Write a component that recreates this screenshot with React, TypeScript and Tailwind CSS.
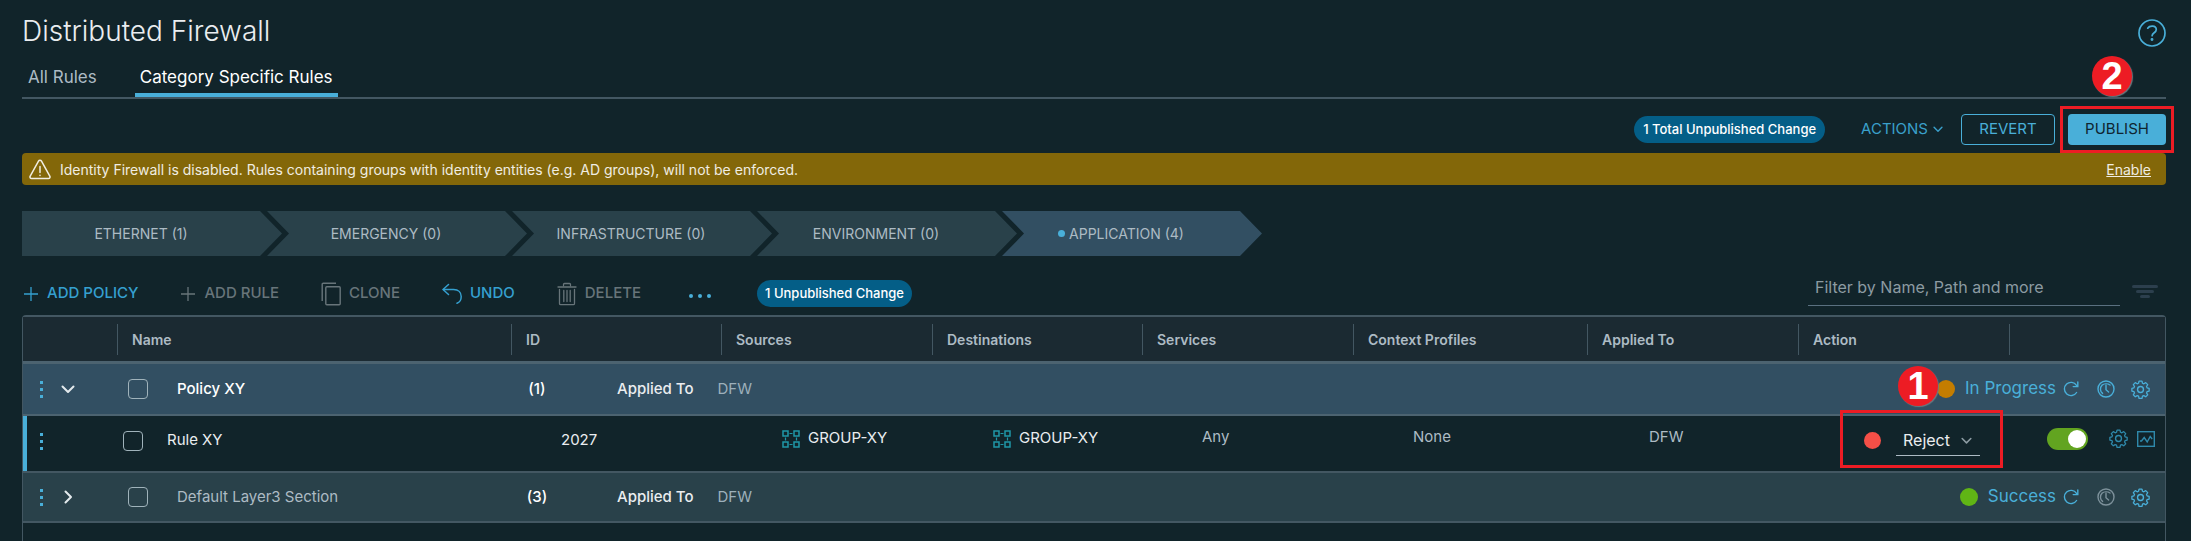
import React from "react";

type P = { className?: string };

const Chevron = ({ className = "", dir = "down" }: P & { dir?: "down" | "right" }) => (
  <svg viewBox="0 0 14 14" className={className} fill="none" stroke="currentColor" strokeWidth="2" strokeLinecap="round" strokeLinejoin="round">
    {dir === "down" ? <path d="M1.5 4.5 7 10l5.5-5.5" /> : <path d="M4.5 1.5 10 7l-5.5 5.5" />}
  </svg>
);

const Plus = () => (
  <svg viewBox="0 0 16 16" className="size-4" stroke="currentColor" strokeWidth="1.3"><path d="M8 1v14M1 8h14" /></svg>
);

const Clone = () => (
  <svg viewBox="0 0 20 24" className="h-6 w-5" fill="none" stroke="currentColor" strokeWidth="1.4">
    <path d="M1.2 19V2.200a1 1 0 0 1 1-1H15" />
    <rect x="4.800" y="4.800" width="14.400" height="18" rx="1" />
  </svg>
);

const Undo = () => (
  <svg viewBox="0 0 20 22" className="h-[22px] w-5" fill="none" stroke="currentColor" strokeWidth="1.5" strokeLinecap="round" strokeLinejoin="round">
    <path d="M6.500 1.500 1 6.500l5.500 5" /><path d="M1.500 6.500h10c5 0 7.700 3.200 7.700 7 0 3-1.500 5.800-4.200 6.700" />
  </svg>
);

const Trash = () => (
  <svg viewBox="0 0 20 24" className="h-6 w-5" fill="none" stroke="currentColor" strokeWidth="1.300" strokeLinecap="round">
    <path d="M1 5h18M6.500 3.500V2.500a1 1 0 0 1 1-1h5a1 1 0 0 1 1 1v1M2.500 7.500v14a1.200 1.200 0 0 0 1.200 1.200h12.600a1.200 1.200 0 0 0 1.200-1.200v-14M6.800 8.500v11M10 8.500v11M13.200 8.500v11" />
  </svg>
);

const Gear = () => (
  <svg viewBox="0 0 36 36" className="size-[19px]" fill="none" stroke="currentColor" strokeWidth="2.600" strokeLinejoin="round">
    <path d="M15 2.500h6l1 4.400 2.700 1.100 3.900-2.400 4 4-2.400 3.900 1.100 2.700 4.200 1v5.600l-4.200 1-1.100 2.700 2.400 3.900-4 4-3.900-2.400-2.700 1.100-1 4.400h-6l-1-4.400-2.700-1.100-3.900 2.400-4-4 2.400-3.900-1.100-2.700-4.200-1v-5.600l4.200-1 1.100-2.700-2.400-3.900 4-4 3.900 2.400 2.700-1.100z" transform="translate(1.200 -.3) scale(.935)" />
    <circle cx="18" cy="18" r="5.600" />
  </svg>
);

const History = () => (
  <svg viewBox="0 0 18 18" className="size-[18px]" fill="none" stroke="currentColor" strokeWidth="1.400" strokeLinecap="round">
    <circle cx="9" cy="9" r="8" /><path d="M5 5.200A5.500 5.500 0 0 0 5.600 13.400M5 5.200C7 3.600 10.500 3.300 13 5M9 5.200v4.600l2.600 2.200" />
  </svg>
);

const Refresh = () => (
  <svg viewBox="0 0 16 16" className="size-4" fill="none" stroke="currentColor" strokeWidth="1.400" strokeLinecap="round">
    <path d="M13.600 11.500A6.600 6.600 0 1 1 13.500 4.300M14.800 1v4.600h-4.600" />
  </svg>
);

const Chart = () => (
  <svg viewBox="0 0 18 16" className="h-4 w-[18px]" fill="none" stroke="currentColor" strokeWidth="1.400">
    <rect x=".7" y=".7" width="16.600" height="14.600" /><path d="M3 10h1.500l2.700-3.500 3 4.500 3-5.500 2 2.500" />
  </svg>
);

const Group = () => (
  <svg viewBox="0 0 18 18" className="size-[18px]" fill="none" stroke="#1f97a8" strokeWidth="1.500">
    <path d="M1 1h5v5H1zM12 1h5v5h-5zM1 12h5v5H1zM12 12h5v5h-5z" />
    <path strokeWidth="1.200" d="M7.500 3.500h3M7.500 14.500h3M3.500 7.500v3M14.500 7.500v3" />
  </svg>
);

const Dots = () => (
  <button aria-label="Row menu" className="flex w-3 flex-col items-center gap-[4px] text-[#49afd9]">
    <i className="size-[3px] bg-current" /><i className="size-[3px] bg-current" /><i className="size-[3px] bg-current" />
  </button>
);

const Check = ({ label }: { label: string }) => (
  <input type="checkbox" aria-label={label} className="size-5 shrink-0 appearance-none rounded border border-[#a0b3bb]" />
);

const Badge = ({ n, className = "" }: P & { n: string }) => (
  <span className={"absolute flex size-10 items-center justify-center rounded-full bg-[#ed1c24] font-['Liberation_Sans',sans-serif] text-[38px] leading-none font-bold text-white shadow-[1px_1px_1px_#6d7a80] " + className}>{n}</span>
);

const steps = ["ETHERNET (1)", "EMERGENCY (0)", "INFRASTRUCTURE (0)", "ENVIRONMENT (0)", "APPLICATION (4)"];
const heads = ["Name", "ID", "Sources", "Destinations", "Services", "Context Profiles", "Applied To", "Action", ""];

const Tool = ({ label, icon, on }: { label: string; icon: React.ReactNode; on?: boolean }) => (
  <button className={"flex items-center gap-2 text-[15px] font-medium " + (on ? "text-[#35a0d0]" : "text-[#68757a]")}>{icon}{label}</button>
);

const PolicyRow = ({ open, name, count, status }: { open?: boolean; name: string; count: string; status: string }) => {
  const bg = open ? "bg-[#324f62] border-b-2 border-[#4c6370]" : "bg-[#29414a] border-b-2 border-[#435762]";
  return (
    <tr>
      <td className={bg}>
        <div className="flex items-center gap-[14px] pl-3">
          <Dots />
          <button aria-label="Toggle policy" className="text-[#e3eaed]"><Chevron className="size-[14px]" dir={open ? "down" : "right"} /></button>
        </div>
      </td>
      <td className={bg}>
        <div className={"flex items-center gap-[29px] pl-[11px] " + (open ? "font-medium text-white" : "text-[#adbbc4]")}>
          <Check label={name} />{name}
        </div>
      </td>
      <td colSpan={8} className={bg}>
        <div className={"flex items-center pr-[15px] " + (open ? "h-[50px]" : "h-[48px]")}>
          <span className="w-[52px] text-center font-medium text-white">{count}</span>
          <span className="ml-[54px] font-medium text-[#eaedf0]">Applied To</span>
          <span className="ml-6 text-[#9db0bb]">DFW</span>
          <div className="ml-auto flex items-center text-[#49afd9]">
            <i className={"mr-[10px] size-[18px] rounded-full " + (open ? "bg-[#c47d00]" : "bg-[#60b515]")} />
            <a href="#status" className="text-[17px]">{status}</a>
            <button aria-label="Refresh" className="ml-[7px]"><Refresh /></button>
            <button aria-label="History" className={"ml-[18px] " + (open ? "" : "text-[#7d919b]")}><History /></button>
            <button aria-label="Settings" className="ml-4"><Gear /></button>
          </div>
        </div>
      </td>
    </tr>
  );
};

const rb = "border-b-2 border-[#435762]";

export default function App() {
  return (
    <div className="flex min-h-screen flex-col bg-[#11242a] pr-[25px] pl-[22px] font-['Inter',sans-serif] text-[#adbbc4]">
      <header className="flex items-start justify-between pt-[11px]">
        <h1 className="text-[28px] leading-10 font-light text-[#eaedf0]">Distributed Firewall</h1>
        <button aria-label="Help" className="mt-2 text-[#49afd9]">
          <svg viewBox="0 0 28 28" className="size-7" fill="none" stroke="currentColor" strokeWidth="1.700" strokeLinecap="round">
            <circle cx="14" cy="14" r="13" /><path d="M9.700 9.200C11.300 6.600 18.200 6 18.300 10.500c0 3.200-4.200 3.200-4.200 6.200" /><circle cx="14" cy="20.500" r=".6" fill="currentColor" />
          </svg>
        </button>
      </header>
      <nav className="flex h-[48px] items-stretch border-b-2 border-[#435762] pl-[6px] text-[17px]">
        <a href="#all" className="mr-[38px] pt-3 leading-7">All Rules</a>
        <a href="#category" className="border-b-4 border-[#49afd9] px-[5px] pt-3 leading-7 text-white">Category Specific Rules</a>
      </nav>

      <div className="flex h-[54px] items-center justify-end pt-[6px]">
        <span className="mr-9 rounded-full bg-[#045e87] px-[9px] text-[13px] leading-[27px] font-medium text-white">1 Total Unpublished Change</span>
        <button className="mr-[18px] flex items-center gap-[5px] text-[15px] text-[#3aa0cb]">ACTIONS<Chevron className="size-[10px]" /></button>
        <button className="mr-[13px] h-[31px] w-[94px] rounded border border-[#49afd9] text-[15px] text-[#49afd9]">REVERT</button>
        <div className="relative">
          <button className="h-[31px] w-[98px] rounded bg-[#49afd9] text-[15px] text-[#0f2530]">PUBLISH</button>
          <span className="pointer-events-none absolute -inset-2 border-[3px] border-[#ed1c24]" />
          <Badge n="2" className="-top-[58px] left-6" />
        </div>
      </div>

      <div className="flex h-8 items-center rounded bg-[#836709] pr-[15px] pl-[7px] text-[14px] text-[#f0ede2]">
        <svg viewBox="0 0 22 20" className="mr-[9px] h-[21px] w-[22px]" fill="none" stroke="currentColor" strokeWidth="1.500" strokeLinecap="round" strokeLinejoin="round">
          <path d="M9.500 1.700a1.700 1.700 0 0 1 3 0l8.300 15a1.600 1.600 0 0 1-1.400 2.400H2.600a1.600 1.600 0 0 1-1.400-2.400zM11 7v6M11 15.800v.2" />
        </svg>
        Identity Firewall is disabled. Rules containing groups with identity entities (e.g. AD groups), will not be enforced.
        <a href="#enable" className="ml-auto underline">Enable</a>
      </div>

      <div className="mt-[26px] flex text-[14px]">
        {steps.map((s, i) => (
          <button key={s} className={"flex h-[45px] w-[260px] items-center justify-center gap-1 pr-[22px] " +
            (i === 0 ? "[clip-path:polygon(0_0,238px_0,100%_50%,238px_100%,0_100%)] " : "-ml-[15px] [clip-path:polygon(0_0,238px_0,100%_50%,238px_100%,0_100%,22px_50%)] ") +
            (i === 4 ? "bg-[#324f62]" : "bg-[#29414a]")}>
            {i === 4 && <i className="size-[7px] rounded-full bg-[#49afd9]" />}{s}
          </button>
        ))}
      </div>

      <div className="flex h-[59px] items-center">
        <div className="mt-4 flex items-center gap-[42px] pl-px">
          <Tool on label="ADD POLICY" icon={<Plus />} />
          <Tool label="ADD RULE" icon={<Plus />} />
          <Tool label="CLONE" icon={<Clone />} />
          <Tool on label="UNDO" icon={<Undo />} />
          <Tool label="DELETE" icon={<Trash />} />
          <button aria-label="More" className="mt-1 ml-[6px] flex gap-[5px]">
            <i className="size-1 rounded-full bg-[#49afd9]" /><i className="size-1 rounded-full bg-[#49afd9]" /><i className="size-1 rounded-full bg-[#49afd9]" />
          </button>
          <span className="ml-1 rounded-full bg-[#045e87] px-2 text-[13px] leading-[27px] font-medium text-white">1 Unpublished Change</span>
        </div>
        <input aria-label="Filter" placeholder="Filter by Name, Path and more" className="mt-1 mr-3 ml-auto h-9 w-[312px] border-b border-[#5a7080] bg-transparent px-[7px] text-[16px] placeholder:text-[#8c9ba2]" />
        <button aria-label="Filter options" className="mt-3 mr-2 flex w-[26px] flex-col items-center gap-[2px]">
          <i className="h-[3px] w-[26px] rounded bg-[#2c3f4d]" /><i className="h-[3px] w-[18px] rounded bg-[#2c3f4d]" /><i className="h-[3px] w-[10px] rounded bg-[#2c3f4d]" />
        </button>
      </div>

      <div className="flex-1 rounded-t border-x border-t-2 border-[#435762]">
        <table className="w-full table-fixed border-separate border-spacing-0 text-[15px]">
          <colgroup>
            <col className="w-[94px]" /><col /><col className="w-[210px]" /><col className="w-[211px]" /><col className="w-[210px]" />
            <col className="w-[211px]" /><col className="w-[234px]" /><col className="w-[211px]" /><col className="w-[211px]" /><col className="w-[156px]" />
          </colgroup>
          <thead>
            <tr className="text-left text-[14px]">
              <td className="h-[47px] border-b-[3px] border-[#4c6370] bg-[#1b2a32]" />
              {heads.map((h) => (
                <th key={h} className="h-[47px] border-b-[3px] border-[#4c6370] bg-[#1b2a32] p-0 font-semibold">
                  <div className="h-[31px] border-l border-[#435762] pl-[14px] leading-[31px]">{h}</div>
                </th>
              ))}
            </tr>
          </thead>
          <tbody>
            <PolicyRow open name="Policy XY" count="(1)" status="In Progress" />
            <tr>
              <td className={rb}><div className="flex h-[55px] items-center border-l-4 border-[#49afd9] pb-1 pl-2"><Dots /></div></td>
              <td className={rb}><div className="flex items-center gap-6 pb-[6px] pl-[6px] text-[#eaedf0]"><Check label="Rule XY" />Rule XY</div></td>
              <td className={rb + " pb-[6px] pl-[50px] text-[#eaedf0]"}>2027</td>
              {["src", "dst"].map((k) => (
                <td key={k} className={rb}><div className="flex items-center gap-2 pb-[10px] pl-[61px] text-[#eaedf0]"><Group />GROUP-XY</div></td>
              ))}
              <td className={rb + " pb-3 pl-[60px]"}>Any</td>
              <td className={rb + " pb-3 pl-[60px]"}>None</td>
              <td className={rb + " pb-3 pl-[62px]"}>DFW</td>
              <td className={rb}>
                <div className="relative flex h-[55px] items-center pb-[6px] pl-[66px]">
                  <i className="size-[17px] rounded-full bg-[#f54f47]" />
                  <div className="relative ml-[15px] flex items-center">
                    <select aria-label="Action" className="h-[30px] w-[84px] appearance-none border-b border-[#adbbc4] bg-transparent pl-[7px] text-[16px] text-[#eaedf0]"><option>Reject</option></select>
                    <Chevron className="pointer-events-none absolute right-2 size-[11px] text-[#8c9ba2]" />
                  </div>
                  <span className="pointer-events-none absolute top-[-6px] left-[42px] h-[58px] w-[163px] border-[3px] border-[#ed1c24]" />
                  <Badge n="1" className="-top-[50px] left-[100px]" />
                </div>
              </td>
              <td className={rb}>
                <div className="flex items-center pb-[10px] pl-[38px] text-[#2f89ab]">
                  <label className="flex h-[22px] w-[41px] items-center justify-end rounded-full bg-[#62a420] pr-[2px]">
                    <input type="checkbox" role="switch" aria-label="Rule enabled" defaultChecked className="size-[18px] appearance-none rounded-full bg-white" />
                  </label>
                  <button aria-label="Rule settings" className="ml-[21px]"><Gear /></button>
                  <button aria-label="Rule statistics" className="ml-[9px]"><Chart /></button>
                </div>
              </td>
            </tr>
            <PolicyRow name="Default Layer3 Section" count="(3)" status="Success" />
          </tbody>
        </table>
      </div>
    </div>
  );
}
